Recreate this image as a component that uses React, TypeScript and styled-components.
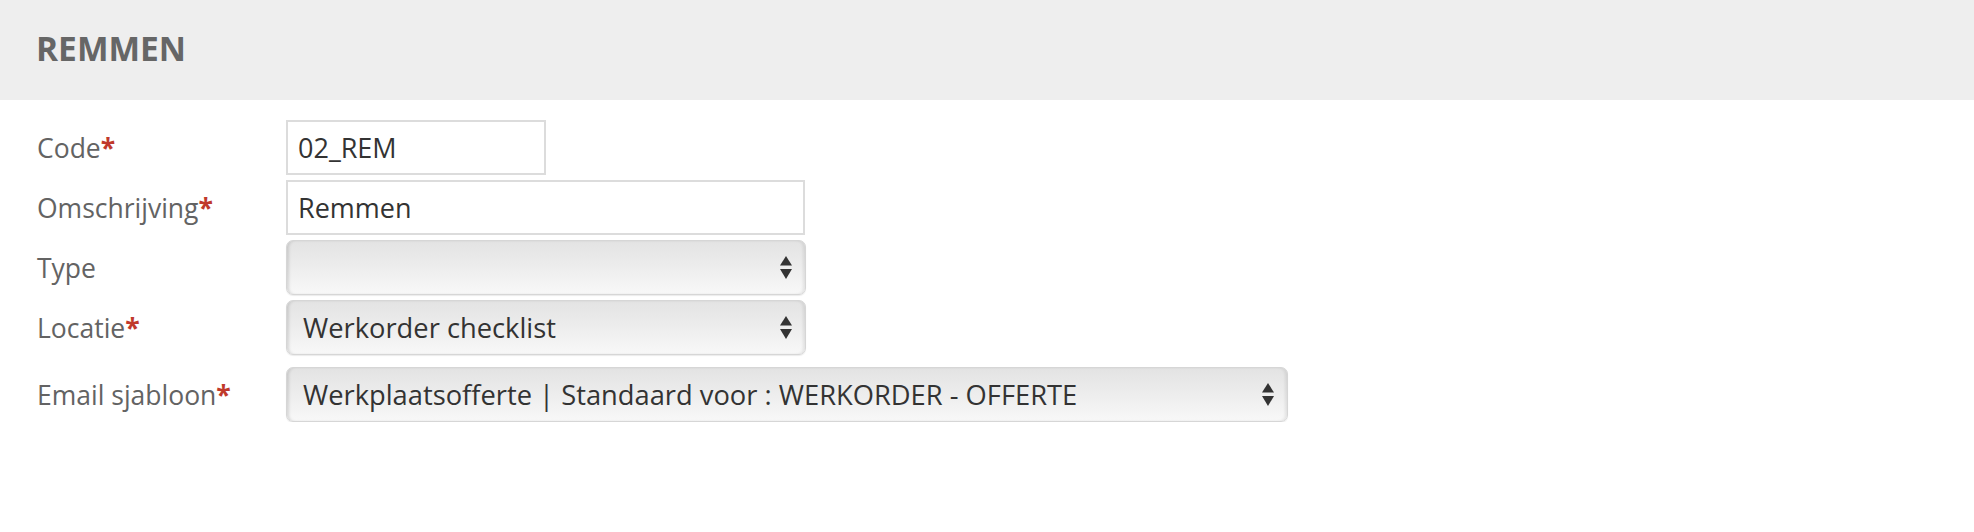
import React from 'react'
import styled, { createGlobalStyle } from 'styled-components'

const GlobalStyle = createGlobalStyle`
  body {
    margin: 0;
    background: #fff;
    font-family: "Open Sans", "Noto Sans", sans-serif;
  }
`

const fields = [
    { label: 'Code', required: true, kind: 'input', value: '02_REM', width: 260 },
    { label: 'Omschrijving', required: true, kind: 'input', value: 'Remmen', width: 519 },
    { label: 'Type', required: false, kind: 'select', value: '', width: 520 },
    { label: 'Locatie', required: true, kind: 'select', value: 'Werkorder checklist', width: 520 },
    { label: 'Email sjabloon', required: true, kind: 'select', value: 'Werkplaatsofferte | Standaard voor : WERKORDER - OFFERTE', width: 1002, spaced: true },
]

const Arrows = () => (
    <svg width="14" height="26" viewBox="0 0 14 26">
        <polygon points="7,1 13,10.5 1,10.5" fill="#333" />
        <polygon points="1,14 13,14 7,24" fill="#333" />
    </svg>
)

export default function App() {
    return (
        <>
            <GlobalStyle />
            <Header>
                <Title>REMMEN</Title>
            </Header>
            <Form>
                {fields.map(f => (
                    <Row key={f.label} $spaced={!!f.spaced}>
                        <Label>
                            {f.label}
                            {f.required && <Star>*</Star>}
                        </Label>
                        {f.kind === 'input' ? (
                            <TextBox $width={f.width}>{f.value}</TextBox>
                        ) : (
                            <SelectBox $width={f.width}>
                                <SelectText>{f.value}</SelectText>
                                <Arrows />
                            </SelectBox>
                        )}
                    </Row>
                ))}
            </Form>
        </>
    )
}

const Header = styled.div`
  box-sizing: border-box;
  height: 100px;
  background: #eeeeee;
  display: flex;
  align-items: center;
  padding: 0 0 5px 36px;
`

const Title = styled.h1`
  margin: 0;
  font-size: 33.5px;
  font-weight: 700;
  color: #666;
`

const Form = styled.div`
  padding: 20px 0 0 37px;
  display: flex;
  flex-direction: column;
  gap: 5px;
`

const Row = styled.div<{ $spaced: boolean }>`
  display: grid;
  grid-template-columns: 249px auto;
  align-items: center;
  margin-top: ${p => (p.$spaced ? '7px' : '0')};
`

const Label = styled.div`
  font-size: 26.5px;
  color: #636363;
`

const Star = styled.span`
  color: #c0392b;
  font-weight: 700;
`

const TextBox = styled.div<{ $width: number }>`
  box-sizing: border-box;
  width: ${p => p.$width}px;
  height: 55px;
  border: 2px solid #dcdcdc;
  padding: 0 10px;
  display: flex;
  align-items: center;
  font-size: 27px;
  color: #333;
`

const SelectBox = styled.div<{ $width: number }>`
  box-sizing: border-box;
  width: ${p => p.$width}px;
  height: 55px;
  border: 1px solid #d6d6d6;
  border-radius: 7px;
  background: linear-gradient(to bottom, #e3e3e3 0%, #ececec 45%, #f8f8f8 100%);
  box-shadow: inset 3px 0 3px -1px rgba(0, 0, 0, 0.12), inset -3px 0 3px -1px rgba(0, 0, 0, 0.08), 0 1px 1px rgba(0, 0, 0, 0.08);
  display: flex;
  align-items: center;
  justify-content: space-between;
  padding: 0 12px 0 16px;
`

const SelectText = styled.span`
  font-size: 27.3px;
  color: #333;
  white-space: nowrap;
`
